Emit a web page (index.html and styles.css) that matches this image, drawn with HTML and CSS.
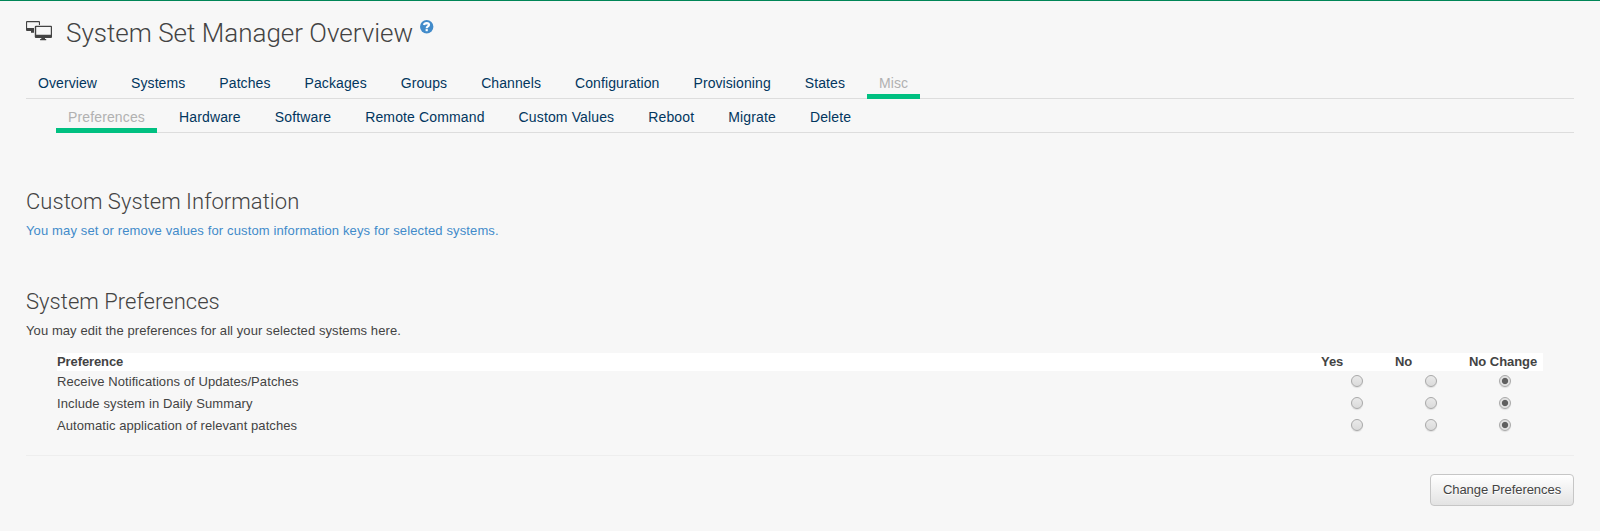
FILE: index.html
```html
<!DOCTYPE html>
<html lang="en">
<head>
<meta charset="utf-8">
<title>System Set Manager Overview</title>
<link rel="stylesheet" href="styles.css">
</head>
<body>
<main class="page">
  <header class="title">
    <svg class="title-icon" width="26" height="20" viewBox="0 0 26 20">
      <path fill="#434343" fill-rule="evenodd" d="M1 0H13Q14 0 14 1V4H12.9V1.2H1.1V7H8V10H1Q0 10 0 9V1Q0 0 1 0ZM5 10H8V11.8H5ZM10 4.8H25Q26 4.8 26 5.8V16Q26 17 25 17H10Q8.8 17 8.8 16V5.8Q8.8 4.8 10 4.8ZM10.2 6.1V13.8H24.8V6.1ZM15.3 17H19V18H20.2V19.2H14.1V18H15.3Z"/>
    </svg>
    <h1>System Set Manager Overview</h1>
    <svg class="help" width="14" height="14" viewBox="0 0 14 14">
      <circle cx="6.7" cy="6.7" r="6.7" fill="#428bca"/>
      <path fill="none" stroke="#fff" stroke-width="2.2" d="M4 5Q4.4 3.1 6.7 3.1Q9 3.2 9 4.8Q9 5.8 7.8 6.4Q6.7 7 6.7 8.3"/>
      <path fill="#fff" d="M5.6 9.1H7.8V11.2H5.6Z"/>
    </svg>
  </header>
  <nav class="tabs">
    <a>Overview</a><a>Systems</a><a>Patches</a><a>Packages</a><a>Groups</a><a>Channels</a><a>Configuration</a><a>Provisioning</a><a>States</a><a class="active">Misc</a>
  </nav>
  <nav class="tabs subtabs">
    <a class="active">Preferences</a><a>Hardware</a><a>Software</a><a>Remote Command</a><a>Custom Values</a><a>Reboot</a><a>Migrate</a><a>Delete</a>
  </nav>
  <section class="custom">
    <h2>Custom System Information</h2>
    <p><a class="link">You may set or remove values for custom information keys for selected systems.</a></p>
  </section>
  <section class="prefs">
    <h2>System Preferences</h2>
    <p class="edit">You may edit the preferences for all your selected systems here.</p>
    <div class="table">
      <div class="row head"><b class="pref">Preference</b><b>Yes</b><b>No</b><b>No Change</b></div>
      <div class="row"><span class="receive">Receive Notifications of Updates/Patches</span><i class="radio"></i><i class="radio"></i><i class="radio on"></i></div>
      <div class="row"><span class="daily">Include system in Daily Summary</span><i class="radio"></i><i class="radio"></i><i class="radio on"></i></div>
      <div class="row"><span class="auto">Automatic application of relevant patches</span><i class="radio"></i><i class="radio"></i><i class="radio on"></i></div>
    </div>
  </section>
  <footer class="actions"><button class="btn">Change Preferences</button></footer>
</main>
</body>
</html>
```
FILE: styles.css
```css
* { box-sizing: border-box; }
body {
  margin: 0;
  background: #f7f7f7;
  color: #434343;
  font: 13px/18px "Liberation Sans", Arial, sans-serif;
}
.page {
  height: 531px;
  padding: 0 26px;
  border-top: 1px solid #008657;
  overflow: hidden;
}
.title { display: flex; height: 65px; padding-top: 17px; }
.title-icon { margin-top: 3px; }
.help { margin: 2px 0 0 7px; }
h1, h2 { margin: 0; font-family: Roboto, sans-serif; font-weight: 300; white-space: nowrap; }
h1 { margin-left: 14px; font-size: 26px; line-height: 30px; }
h2 { font-size: 22px; line-height: 26px; letter-spacing: .04px; }
p { margin: 0; white-space: nowrap; }
.tabs {
  display: flex;
  gap: 10px;
  height: 33px;
  border-bottom: 1px solid #ddd;
  font-size: 14px;
  line-height: 20px;
  letter-spacing: .087px;
}
.tabs a { height: 33px; padding: 7px 12px 0; color: #02365e; }
.tabs a.active { color: #b1b1b1; border-bottom: 5px solid #00c081; }
.subtabs { margin-left: 30px; height: 34px; letter-spacing: .137px; }
.subtabs a { height: 34px; padding-top: 8px; }
.custom { padding-top: 56px; }
.custom p, .edit { margin-top: 7px; }
.link { color: #428bca; letter-spacing: .129px; }
.edit { letter-spacing: .085px; }
.prefs { padding-top: 49px; height: 216px; border-bottom: 1px solid #eee; }
.table { width: 1486px; margin: 13px 0 0 31px; }
.row {
  display: grid;
  grid-template-columns: 1264px 74px 74px 74px;
  height: 22px;
  line-height: 22px;
  white-space: nowrap;
}
.row.head { height: 18px; line-height: 18px; background: #fff; letter-spacing: -.05px; }
.pref { letter-spacing: -.1px; }
.receive { letter-spacing: .08px; }
.daily { letter-spacing: .11px; }
.auto { letter-spacing: .075px; }
.radio {
  width: 12px;
  height: 12px;
  margin: 4px 0 0 30px;
  border: 1px solid #a8a8a8;
  border-radius: 50%;
  background: linear-gradient(#e9e9e9, #dadada);
  box-shadow: 0 1px 1px rgba(0, 0, 0, .1);
}
.radio.on { background: radial-gradient(circle, #606060 2.7px, #e2e2e2 3.6px); }
.actions { display: flex; justify-content: flex-end; padding-top: 18px; }
.btn {
  width: 144px;
  height: 32px;
  padding: 0;
  border: 1px solid #c6c6c6;
  border-radius: 4px;
  background: linear-gradient(#fff, #e3e3e3);
  color: #434343;
  font: 13px/18px "Liberation Sans", Arial, sans-serif;
  letter-spacing: -.06px;
  text-shadow: 0 1px 0 #fff;
}
```
